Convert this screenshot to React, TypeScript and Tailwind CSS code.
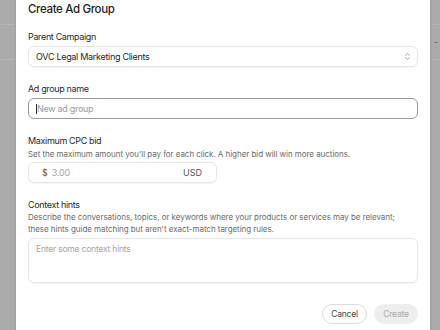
import { ChevronsUpDown } from "lucide-react"

function Label({ children }: { children: React.ReactNode }) {
    return <div className="text-[9px] leading-[12px] tracking-[-0.35px] text-[#2a2a2a]">{children}</div>
}

function Hint({ children }: { children: React.ReactNode }) {
    return <div className="text-[8px] leading-[12px] tracking-[-0.05px] text-[#6b6b6b]">{children}</div>
}

export default function App() {
    return (
        <div
            className="flex h-[330px] w-[440px] overflow-hidden bg-[#ababab]"
            style={{ fontFamily: "Inter, 'Noto Sans', sans-serif" }}
        >
            {/* backdrop - left */}
            <div className="flex w-[16px] shrink-0 flex-col border-r-2 border-[#a3a3a3]">
                <div className="h-[25px] border-b border-[#b5b5b5]" />
                <div className="h-[35px] border-b border-[#b5b5b5]" />
            </div>

            {/* dialog */}
            <div className="flex w-[414px] shrink-0 flex-col bg-white px-3 pt-[2px]">
                <h2 className="text-[11.5px] font-medium leading-[14px] tracking-[-0.35px] text-[#1f1f1f]">Create Ad Group</h2>

                <div className="mt-[15px]">
                    <Label>Parent Campaign</Label>
                    <div className="mt-[3px] flex h-[21px] w-[390px] items-center justify-between rounded-md border border-[#e6e6e6] pl-[7px] pr-[5px] shadow-[0_1px_1px_rgba(0,0,0,0.04)]">
                        <span className="text-[9px] tracking-[-0.3px] text-[#1f1f1f]">OVC Legal Marketing Clients</span>
                        <ChevronsUpDown className="h-[9px] w-[9px] text-[#777]" strokeWidth={1.75} />
                    </div>
                </div>

                <div className="mt-[16px]">
                    <Label>Ad group name</Label>
                    <div className="mt-[3px] flex h-[21px] w-[390px] items-center rounded-md border border-[#9a9a9a] px-[7px]">
                        <span className="h-[10px] w-px bg-[#333]" />
                        <span className="text-[9px] tracking-[-0.3px] text-[#9a9a9a]">New ad group</span>
                    </div>
                </div>

                <div className="mt-[16px]">
                    <Label>Maximum CPC bid</Label>
                    <div className="mt-px">
                        <Hint>Set the maximum amount you'll pay for each click. A higher bid will win more auctions.</Hint>
                    </div>
                    <div className="mt-[2px] flex h-[21px] w-[189px] items-center rounded-md border border-[#e6e6e6] pl-[13px] pr-[14px] shadow-[0_1px_1px_rgba(0,0,0,0.04)]">
                        <span className="text-[9px] text-[#555]">$</span>
                        <span className="ml-[4px] flex-1 text-[9px] tracking-[-0.2px] text-[#a5a5a5]">3.00</span>
                        <span className="text-[9px] text-[#555]">USD</span>
                    </div>
                </div>

                <div className="mt-[16px]">
                    <Label>Context hints</Label>
                    <Hint>
                        Describe the conversations, topics, or keywords where your products or services may be relevant;
                        <br />
                        these hints guide matching but aren't exact-match targeting rules.
                    </Hint>
                    <div className="mt-[3px] h-[45px] w-[390px] rounded-md border border-[#e6e6e6] px-[7px] pt-[4px] text-[8.5px] leading-[12px] tracking-[-0.2px] text-[#a5a5a5] shadow-[0_1px_1px_rgba(0,0,0,0.04)]">
                        Enter some context hints
                    </div>
                </div>

                <div className="mt-[21px] flex w-[390px] justify-end gap-[7px]">
                    <button className="h-[20px] w-[45px] rounded-full border border-[#dcdcdc] text-[8.5px] tracking-[-0.2px] text-[#444]">Cancel</button>
                    <button className="h-[20px] w-[44px] rounded-full bg-[#eeeeee] text-[8.5px] tracking-[-0.2px] text-[#a8a8a8]">Create</button>
                </div>
            </div>

            {/* backdrop - right */}
            <div className="flex flex-1 flex-col border-l-2 border-[#a3a3a3]">
                <div className="h-[25px] border-b border-[#b5b5b5]" />
                <div className="flex h-[35px] items-center border-b border-[#b5b5b5] pl-[2px] text-[9px] text-[#555]">-</div>
            </div>
        </div>
    )
}
